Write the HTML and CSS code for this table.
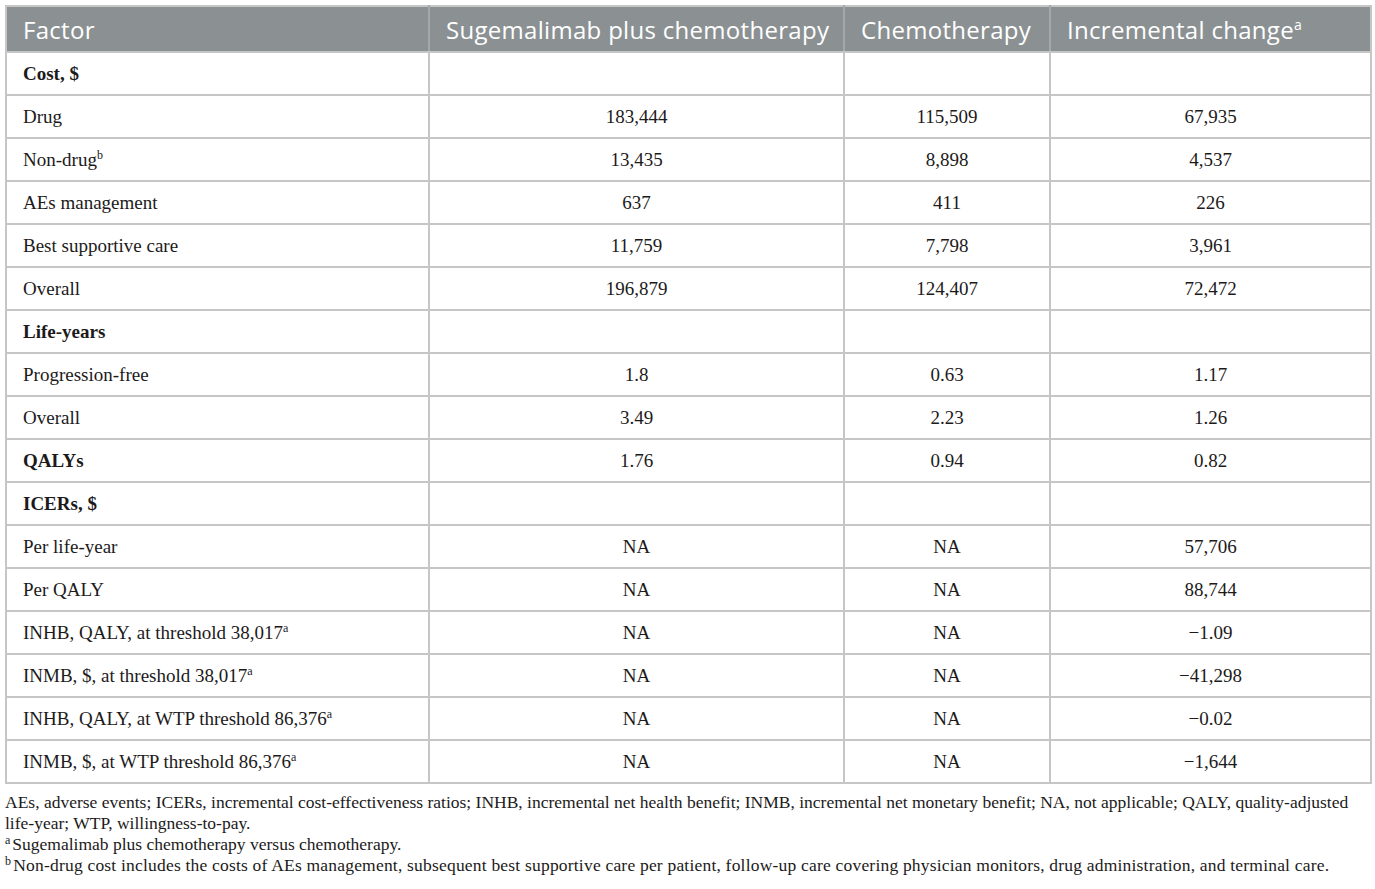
FILE: index.html
```html
<!DOCTYPE html>
<html>
<head>
<meta charset="utf-8">
<link rel="stylesheet" href="styles.css">
</head>
<body>
<div class="page">
<table class="data">
<colgroup>
<col class="c1"><col class="c2"><col class="c3"><col class="c4">
</colgroup>
<thead>
<tr><th class="left">Factor</th><th>Sugemalimab plus chemotherapy</th><th>Chemotherapy</th><th>Incremental change<sup>a</sup></th></tr>
</thead>
<tbody>
<tr><td class="left bold">Cost, $</td><td></td><td></td><td></td></tr>
<tr><td class="left">Drug</td><td>183,444</td><td>115,509</td><td>67,935</td></tr>
<tr><td class="left">Non-drug<sup>b</sup></td><td>13,435</td><td>8,898</td><td>4,537</td></tr>
<tr><td class="left">AEs management</td><td>637</td><td>411</td><td>226</td></tr>
<tr><td class="left">Best supportive care</td><td>11,759</td><td>7,798</td><td>3,961</td></tr>
<tr><td class="left">Overall</td><td>196,879</td><td>124,407</td><td>72,472</td></tr>
<tr><td class="left bold">Life-years</td><td></td><td></td><td></td></tr>
<tr><td class="left">Progression-free</td><td>1.8</td><td>0.63</td><td>1.17</td></tr>
<tr><td class="left">Overall</td><td>3.49</td><td>2.23</td><td>1.26</td></tr>
<tr><td class="left bold">QALYs</td><td>1.76</td><td>0.94</td><td>0.82</td></tr>
<tr><td class="left bold">ICERs, $</td><td></td><td></td><td></td></tr>
<tr><td class="left">Per life-year</td><td>NA</td><td>NA</td><td>57,706</td></tr>
<tr><td class="left">Per QALY</td><td>NA</td><td>NA</td><td>88,744</td></tr>
<tr><td class="left">INHB, QALY, at threshold 38,017<sup>a</sup></td><td>NA</td><td>NA</td><td>&minus;1.09</td></tr>
<tr><td class="left">INMB, $, at threshold 38,017<sup>a</sup></td><td>NA</td><td>NA</td><td>&minus;41,298</td></tr>
<tr><td class="left">INHB, QALY, at WTP threshold 86,376<sup>a</sup></td><td>NA</td><td>NA</td><td>&minus;0.02</td></tr>
<tr><td class="left">INMB, $, at WTP threshold 86,376<sup>a</sup></td><td>NA</td><td>NA</td><td>&minus;1,644</td></tr>
</tbody>
</table>
<div class="notes">
<p>AEs, adverse events; ICERs, incremental cost-effectiveness ratios; INHB, incremental net health benefit; INMB, incremental net monetary benefit; NA, not applicable; QALY, quality-adjusted<br>life-year; WTP, willingness-to-pay.</p>
<p><sup>a</sup>Sugemalimab plus chemotherapy versus chemotherapy.</p>
<p class="wide"><sup>b</sup>Non-drug cost includes the costs of AEs management, subsequent best supportive care per patient, follow-up care covering physician monitors, drug administration, and terminal care.</p>
</div>
</div>
</body>
</html>
```

FILE: styles.css
```css
html, body {
  margin: 0;
  padding: 0;
  background: #ffffff;
}
.page {
  padding: 5px 5px 0 5px;
}
.data {
  width: 1365px;
  border-collapse: collapse;
  table-layout: fixed;
  border: 2px solid #c6c6c6;
}
.c1 { width: 423px; }
.c2 { width: 415px; }
.c3 { width: 206px; }
.c4 { width: 321px; }
.data th {
  background: #8b9193;
  color: #ffffff;
  font-family: "Open Sans", sans-serif;
  font-weight: 400;
  font-size: 24px;
  letter-spacing: 0.3px;
  height: 44px;
  padding: 0 16px;
  text-align: left;
  border-left: 2px solid #a3a8aa;
  border-bottom: 2px solid #c6c6c6;
  white-space: nowrap;
}
.data th:first-child { border-left: none; }
.data th sup {
  font-size: 14px;
  vertical-align: 9px;
  line-height: 0;
}
.data td {
  font-family: "Liberation Serif", serif;
  font-size: 19px;
  color: #1c1a1a;
  height: 41px;
  padding: 0 16px;
  text-align: center;
  border: 2px solid #c6c6c6;
  white-space: nowrap;
}
.data td.left { text-align: left; }
.data td.bold { font-weight: 700; }
.data td sup {
  font-size: 12px;
  vertical-align: 7px;
  line-height: 0;
}
.notes {
  font-family: "Liberation Serif", serif;
  font-size: 17.5px;
  color: #1c1a1a;
  padding-top: 8px;
}
.notes p {
  margin: 0;
  line-height: 21px;
  white-space: nowrap;
}
.notes p.wide {
  letter-spacing: 0.2px;
}
.notes sup {
  font-size: 12px;
  vertical-align: 6px;
  line-height: 0;
  margin-right: 2px;
}
```
